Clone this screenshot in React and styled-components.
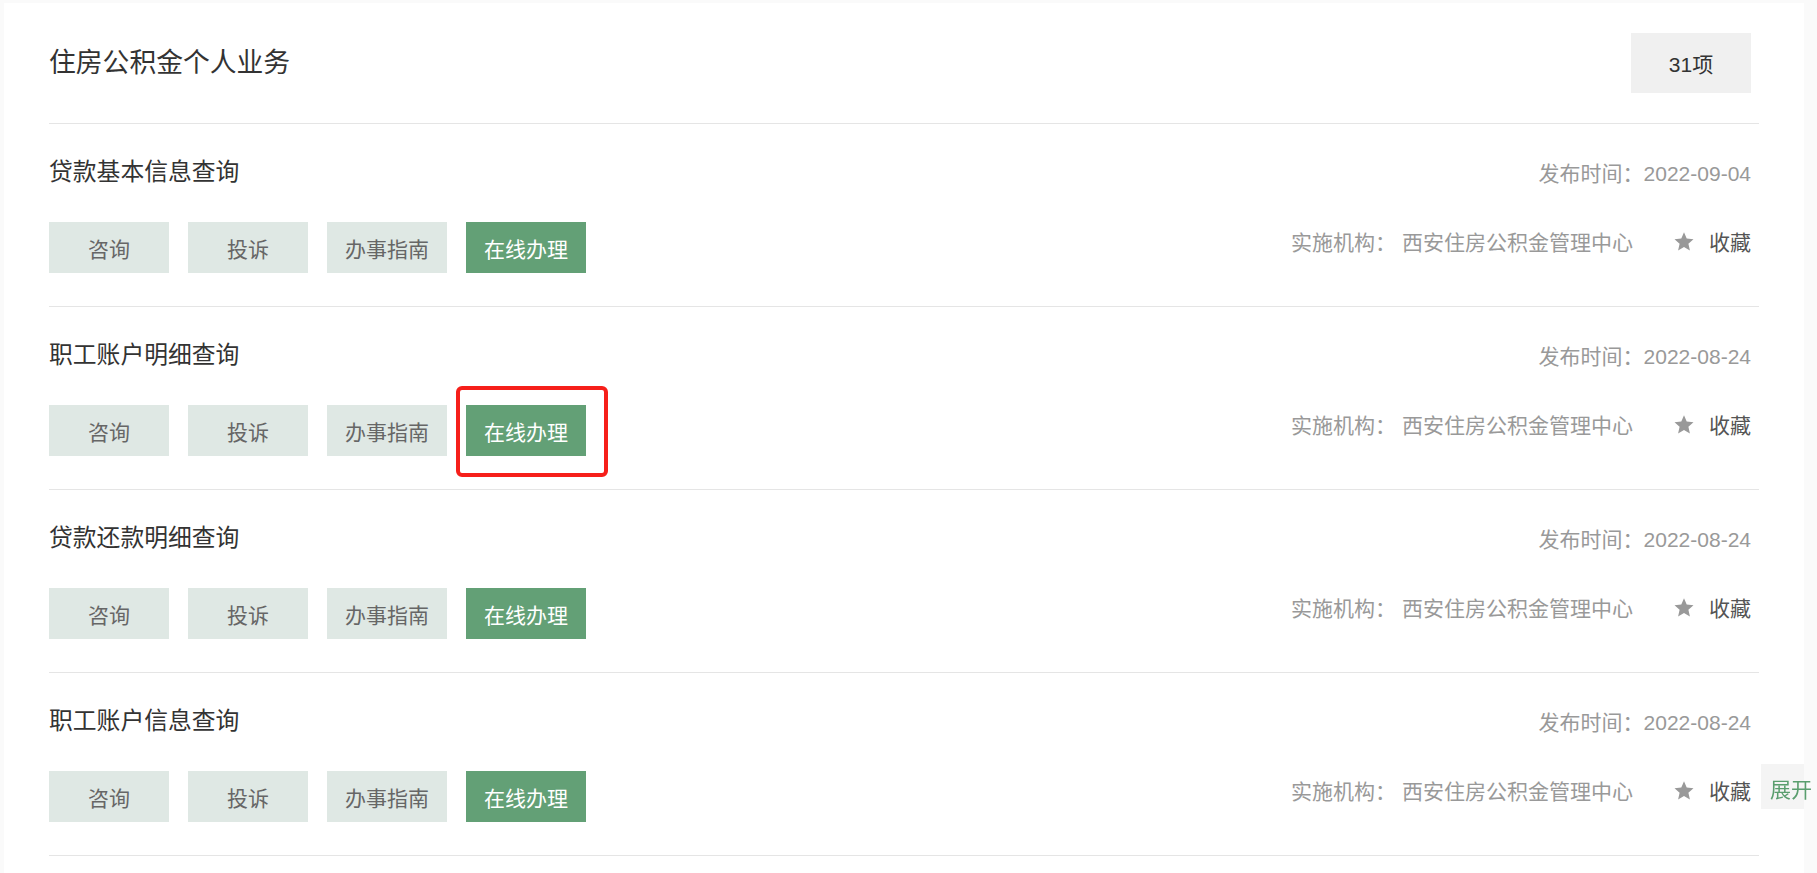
import React from "react";
import styled, { createGlobalStyle } from "styled-components";

const GlobalStyle = createGlobalStyle`
  html, body {
    margin: 0;
    padding: 0;
    background: #fafafa;
  }
  body {
    font-family: "Liberation Sans", "Noto Sans CJK SC", sans-serif;
  }
  * { box-sizing: border-box; }
`;

const Page = styled.div`
  padding: 3px 13px 0 4px;
  background: #fafafa;
  min-height: 100vh;
`;

const Card = styled.section`
  background: #ffffff;
  padding: 0 45px 40px;
`;

const Header = styled.header`
  display: flex;
  align-items: center;
  justify-content: space-between;
  padding: 30px 8px 30px 0;
  border-bottom: 1px solid #e5e5e5;
`;

const Title = styled.h1`
  margin: 0;
  font-size: 26.8px;
  font-weight: 400;
  line-height: 36px;
  color: #333333;
`;

const Count = styled.div`
  width: 120px;
  height: 60px;
  background: #f0f0f0;
  display: flex;
  align-items: center;
  justify-content: center;
  font-size: 21px;
  color: #333333;
`;

const Row = styled.article`
  padding: 30px 8px 33px 0;
  border-bottom: 1px solid #e5e5e5;
`;

const TopLine = styled.div`
  display: flex;
  align-items: center;
  justify-content: space-between;
  height: 36px;
`;

const RowTitle = styled.h2`
  margin: 0;
  font-size: 23.8px;
  font-weight: 400;
  color: #333333;
  line-height: 36px;
`;

const DateText = styled.div`
  font-size: 21px;
  color: #999999;
`;

const BottomLine = styled.div`
  margin-top: 32px;
  display: flex;
  align-items: flex-start;
  justify-content: space-between;
`;

const Actions = styled.div`
  display: flex;
  gap: 19px;
`;

const ActionButton = styled.button`
  position: relative;
  width: 120px;
  height: 51px;
  padding: 0;
  border: none;
  background: ${(p) => (p.$primary ? "#63a076" : "#dfe8e4")};
  color: ${(p) => (p.$primary ? "#ffffff" : "#666666")};
  font-family: inherit;
  font-size: 21px;
  display: flex;
  align-items: center;
  justify-content: center;
  cursor: pointer;
`;

const Marker = styled.span`
  position: absolute;
  left: -10px;
  top: -19px;
  width: 152px;
  height: 91px;
  border: 4px solid #f61f1a;
  border-radius: 6px;
  pointer-events: none;
`;

const Meta = styled.div`
  display: flex;
  align-items: center;
  height: 36px;
  margin-top: 1px;
`;

const Agency = styled.div`
  display: flex;
  align-items: center;
  gap: 6px;
  font-size: 21px;
  color: #999999;
`;

const Fav = styled.div`
  margin-left: 41px;
  display: flex;
  align-items: center;
  gap: 15px;
  font-size: 21px;
  color: #555555;
  cursor: pointer;
`;

const Expand = styled.div`
  position: fixed;
  left: 1761px;
  top: 764px;
  width: 43px;
  height: 45px;
  background: #f4f4f4;
  padding-left: 9px;
  line-height: 52px;
  white-space: nowrap;
  overflow: visible;
  font-size: 21px;
  color: #5a9e6e;
  cursor: pointer;
`;

const Star = () => (
  <svg width="20" height="19" viewBox="0 0 20 19" aria-hidden="true">
    <polygon
      points="10,0.3 12.7,6.6 19.5,7.2 14.4,11.7 15.9,18.4 10,14.9 4.1,18.4 5.6,11.7 0.5,7.2 7.3,6.6"
      fill="#999999"
    />
  </svg>
);

const items = [
  { title: "贷款基本信息查询", date: "2022-09-04" },
  { title: "职工账户明细查询", date: "2022-08-24", marked: true },
  { title: "贷款还款明细查询", date: "2022-08-24" },
  { title: "职工账户信息查询", date: "2022-08-24" },
];

const buttons = ["咨询", "投诉", "办事指南"];

export default function App() {
  return (
    <>
      <GlobalStyle />
      <Page>
        <Card>
          <Header>
            <Title>住房公积金个人业务</Title>
            <Count>31项</Count>
          </Header>
          {items.map((item) => (
            <Row key={item.title}>
              <TopLine>
                <RowTitle>{item.title}</RowTitle>
                <DateText>发布时间：{item.date}</DateText>
              </TopLine>
              <BottomLine>
                <Actions>
                  {buttons.map((b) => (
                    <ActionButton key={b}>{b}</ActionButton>
                  ))}
                  <ActionButton $primary>
                    在线办理
                    {item.marked && <Marker />}
                  </ActionButton>
                </Actions>
                <Meta>
                  <Agency>
                    <span>实施机构：</span>
                    <span>西安住房公积金管理中心</span>
                  </Agency>
                  <Fav>
                    <Star />
                    <span>收藏</span>
                  </Fav>
                </Meta>
              </BottomLine>
            </Row>
          ))}
        </Card>
      </Page>
      <Expand>展开</Expand>
    </>
  );
}
